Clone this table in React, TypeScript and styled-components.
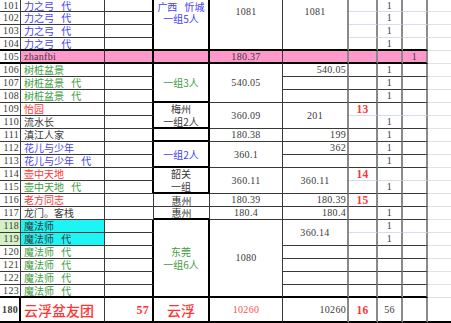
import React from "react";
import styled, { createGlobalStyle } from "styled-components";

const GlobalStyle = createGlobalStyle`
  html, body {
    margin: 0;
    padding: 0;
    background: #fff;
    overflow: hidden;
  }
`;

const Sheet = styled.div`
  display: grid;
  grid-template-columns: 21px 84px 49px 56px 73px 66px 29px 25px 25px 23px;
  grid-template-rows: 12px repeat(22, 13px) 25px;
  width: 451px;
  height: 323px;
  background: #fff;
  overflow: hidden;
`;

interface ICellProps {
  $c: number;
  $r: number;
  $rs: number;
  $bg: string;
  $color: string;
  $align: string;
  $valign: string;
  $bb: string;
  $br: string;
  $font: string;
  $size: number;
  $weight: number;
  $pt: number;
  $lh: number;
  $pl: number;
  $pr: number;
  $ls: number;
  $ws: number;
}

const Cell = styled.div<ICellProps>`
  grid-column: ${p => p.$c} / span 1;
  grid-row: ${p => p.$r} / span ${p => p.$rs};
  box-sizing: border-box;
  display: flex;
  flex-direction: column;
  justify-content: ${p => p.$valign};
  background: ${p => p.$bg};
  color: ${p => p.$color};
  text-align: ${p => p.$align};
  border-bottom: ${p => p.$bb};
  border-right: ${p => p.$br};
  font-family: ${p => p.$font};
  font-size: ${p => p.$size}px;
  font-weight: ${p => p.$weight};
  line-height: ${p => p.$lh}px;
  letter-spacing: ${p => p.$ls}px;
  word-spacing: ${p => p.$ws}px;
  padding: ${p => p.$pt}px ${p => p.$pr}px 0 ${p => p.$pl}px;
  white-space: pre;
  min-width: 0;
  min-height: 0;
`;

const NUM = `"Liberation Serif", "DejaVu Serif", serif`;
const CJK = `"Noto Sans CJK SC", "Noto Sans", sans-serif`;

const BLUE = "#4343f0";
const GREEN = "#3f9c3f";
const RED = "#ff3535";
const DARK = "#3a3a3a";
const PINK = "#ff99cc";
const CYAN = "#1ff4f4";
const HEAD_SEL = "#d3f0c6";

const DK = "1px solid #3a3a3a";
const BK = "2px solid #000";
const GR = "2px solid #8a8a8a";
const LT = "1px solid #d4deec";
const FAINT = "1px solid #e2e2e2";

type Spec = {
  c: number;
  from: number;
  to?: number;
  t?: string;
  color?: string;
  bg?: string;
  align?: "left" | "center" | "right";
  top?: boolean;
  bb?: string;
  br?: string;
  cjk?: boolean;
  size?: number;
  weight?: number;
  pt?: number;
  lh?: number;
  pl?: number;
  pr?: number;
};

const idx = (n: number) => (n === 180 ? 24 : n - 100);
const rows = [...Array.from({ length: 23 }, (_, i) => 101 + i), 180];
const heavy = [104, 105, 123, 180];
const lineFor = (n: number) => (heavy.includes(n) ? BK : DK);

const names: [number, string, string][] = [
  [101, "力之弓 代", BLUE],
  [102, "力之弓 代", BLUE],
  [103, "力之弓 代", BLUE],
  [104, "力之弓 代", BLUE],
  [105, "zhanfbi", DARK],
  [106, "树桩盆景", GREEN],
  [107, "树桩盆景 代", GREEN],
  [108, "树桩盆景 代", GREEN],
  [109, "怡园", RED],
  [110, "流水长", DARK],
  [111, "滇江人家", DARK],
  [112, "花儿与少年", BLUE],
  [113, "花儿与少年 代", BLUE],
  [114, "壶中天地", RED],
  [115, "壶中天地 代", GREEN],
  [116, "老方同志", RED],
  [117, "龙门。客栈", DARK],
  [118, "魔法师", DARK],
  [119, "魔法师 代", DARK],
  [120, "魔法师 代", GREEN],
  [121, "魔法师 代", GREEN],
  [122, "魔法师 代", GREEN],
  [123, "魔法师 代", GREEN],
  [180, "云浮盆友团", RED]
];

type Group = { from: number; to: number; d?: string; dColor?: string; e?: string; thin?: boolean };

const groups: Group[] = [
  { from: 101, to: 104, d: "广西 忻城\n一组5人", dColor: BLUE, e: "1081" },
  { from: 105, to: 105, e: "180.37" },
  { from: 106, to: 108, d: "一组3人", dColor: GREEN, e: "540.05" },
  { from: 109, to: 110, d: "梅州\n一组2人", dColor: DARK, e: "360.09" },
  { from: 111, to: 111, e: "180.38" },
  { from: 112, to: 113, d: "一组2人", dColor: BLUE, e: "360.1" },
  { from: 114, to: 115, d: "韶关\n一组", dColor: DARK, e: "360.11" },
  { from: 116, to: 116, d: "惠州", dColor: DARK, e: "180.39", thin: true },
  { from: 117, to: 117, d: "惠州", dColor: DARK, e: "180.4", thin: true },
  { from: 118, to: 123, d: "东莞\n一组6人", dColor: GREEN, e: "1080" },
  { from: 180, to: 180, d: "云浮", dColor: RED, e: "10260" }
];

const thinRows = [116, 117];

// column F: merged blocks and single cells
const fCells: Spec[] = [
  { c: 6, from: 101, to: 104, t: "1081", align: "center", top: true, pt: 6 },
  { c: 6, from: 105, bg: PINK },
  { c: 6, from: 106, t: "540.05", align: "right" },
  { c: 6, from: 107 },
  { c: 6, from: 108 },
  { c: 6, from: 109, to: 110, t: "201", align: "center" },
  { c: 6, from: 111, t: "199", align: "right" },
  { c: 6, from: 112, t: "362", align: "right" },
  { c: 6, from: 113 },
  { c: 6, from: 114, to: 115, t: "360.11", align: "center" },
  { c: 6, from: 116, t: "180.39", align: "right" },
  { c: 6, from: 117, t: "180.4", align: "right" },
  { c: 6, from: 118, to: 119, t: "360.14", align: "center" },
  { c: 6, from: 120 },
  { c: 6, from: 121 },
  { c: 6, from: 122 },
  { c: 6, from: 123 },
  { c: 6, from: 180, t: "10260", align: "right" }
];

const softRows = [101, 102, 103, 109, 114, 118];
const ranks: Record<number, string> = { 109: "13", 114: "14", 116: "15", 180: "16" };
const ones = [101, 102, 103, 104, 106, 107, 108, 110, 111, 112, 113, 115, 117, 118, 119];

const buildCells = (): Spec[] => {
  const out: Spec[] = [];

  rows.forEach(n => {
    // row header
    out.push({
      c: 1,
      from: n,
      t: String(n),
      align: "right",
      bg: n === 118 || n === 119 ? HEAD_SEL : "#fff",
      weight: n === 180 ? 700 : 400,
      bb: lineFor(n),
      br: n === 180 ? BK : DK,
      pr: 1
    });
  });

  names.forEach(([n, t, color]) => {
    const big = n === 180;
    out.push({
      c: 2,
      from: n,
      t,
      color,
      cjk: n !== 105,
      bg: n === 105 ? PINK : n === 118 || n === 119 ? CYAN : "#fff",
      bb: lineFor(n),
      pl: 3,
      size: big ? 14 : 10,
      weight: big ? 500 : 400,
      lh: big ? 16 : 12
    });
    out.push({
      c: 3,
      from: n,
      t: big ? "57" : "",
      color: RED,
      align: "right",
      pr: 3,
      size: 12,
      weight: 700,
      bg: n === 105 ? PINK : "#fff",
      bb: lineFor(n),
      br: thinRows.includes(n) ? DK : BK
    });
  });

  groups.forEach(g => {
    const big = g.from === 180;
    const first = g.from === 101;
    out.push({
      c: 4,
      from: g.from,
      to: g.to,
      t: g.d || "",
      color: g.dColor,
      cjk: true,
      align: "center",
      top: first,
      pt: first ? 1 : 0,
      lh: big ? 16 : first ? 12 : 13,
      size: big ? 14 : 10,
      weight: big ? 500 : 400,
      bg: g.from === 105 ? PINK : "#fff",
      bb: g.to === 116 ? DK : BK,
      br: g.thin ? DK : BK
    });
    out.push({
      c: 5,
      from: g.from,
      to: g.to,
      t: g.e,
      color: big ? "#ff4d4d" : DARK,
      align: "center",
      top: first,
      pt: first ? 6 : 0,
      bg: g.from === 105 ? PINK : "#fff",
      bb: lineFor(g.to)
    });
  });

  fCells.forEach(f => {
    out.push({ ...f, bb: lineFor(f.to || f.from), br: GR, pr: f.align === "right" ? 1 : 0 });
  });

  rows.forEach(n => {
    const bb = heavy.includes(n) ? BK : softRows.includes(n) ? LT : DK;
    const bg = n === 105 ? PINK : "#fff";
    out.push({ c: 7, from: n, t: ranks[n] || "", color: RED, align: "center", size: 11.5, weight: 700, bg, bb, br: GR });
    out.push({
      c: 8,
      from: n,
      t: n === 180 ? "56" : ones.includes(n) ? "1" : "",
      align: "center",
      bg,
      bb,
      br: GR
    });
    out.push({ c: 9, from: n, t: n === 105 ? "1" : "", align: "center", bg, bb, br: GR });
    out.push({ c: 10, from: n, bb: n === 180 ? BK : FAINT, br: "0" });
  });

  return out;
};

const cells = buildCells();

export default function App() {
  return (
    <>
      <GlobalStyle />
      <Sheet>
        {cells.map((s, i) => (
          <Cell
            key={i}
            $c={s.c}
            $r={idx(s.from)}
            $rs={(s.to ? idx(s.to) : idx(s.from)) - idx(s.from) + 1}
            $bg={s.bg || "#fff"}
            $color={s.color || DARK}
            $align={s.align || "left"}
            $valign={s.top ? "flex-start" : "center"}
            $bb={s.bb || DK}
            $br={s.br || DK}
            $font={s.cjk ? CJK : NUM}
            $size={s.size || 10}
            $weight={s.weight || 400}
            $pt={s.pt || 0}
            $lh={s.lh || 12}
            $pl={s.pl || 0}
            $pr={s.pr || 0}
            $ls={s.cjk ? 0 : 0.3}
            $ws={s.cjk ? 5 : 0}
          >
            {s.t}
          </Cell>
        ))}
      </Sheet>
    </>
  );
}
